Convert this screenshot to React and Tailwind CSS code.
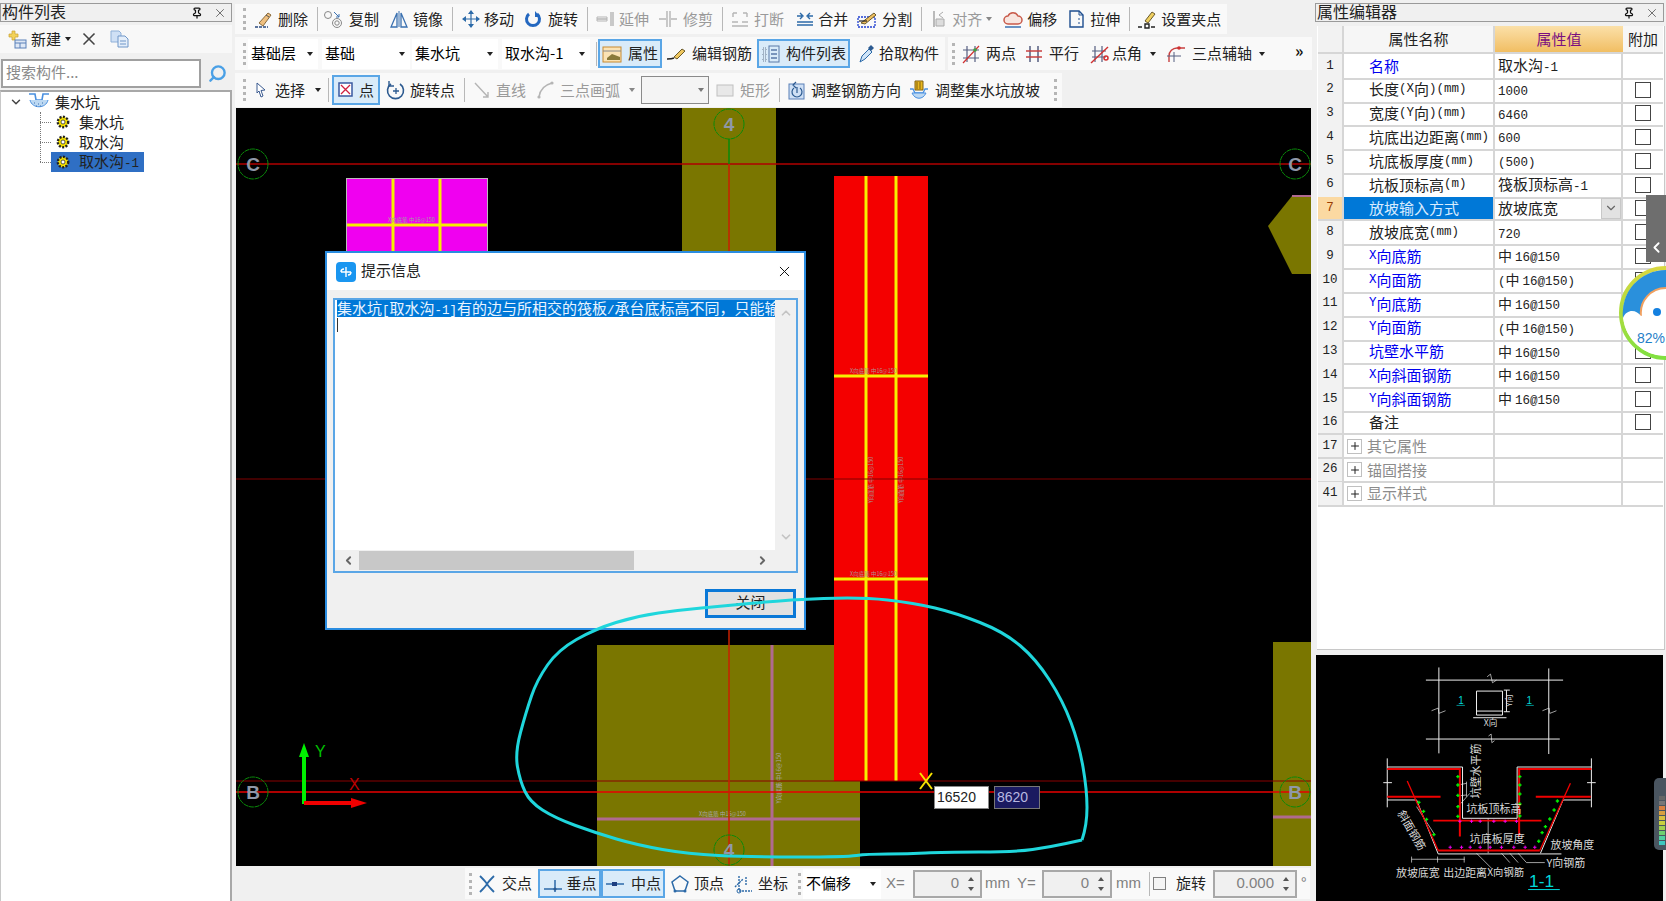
import { Pin, X, Search, ChevronDown, ChevronUp, ChevronLeft, ChevronRight, Plus } from "lucide-react";

// small icon frame, all toolbar icons share it
function I({ w = 20, children }) {
  return (
    <svg width={w} height="20" viewBox={`0 0 ${w} 20`} fill="none" className="shrink-0">
      {children}
    </svg>
  );
}

function Grip({ className = "" }) {
  return <div className={`w-[3px] h-[22px] shrink-0 border-l-[3px] border-dotted border-[#b5b5b5] ${className}`} />;
}

function Sep({ className = "" }) {
  return <div className={`w-px h-[24px] shrink-0 bg-[#b8b8b8] ${className}`} />;
}

function Caret({ className = "" }) {
  return <div className={`w-0 h-0 shrink-0 border-x-[3.5px] border-x-transparent border-t-[4px] border-t-[#222] ${className}`} />;
}

function Tool({ icon, label, className = "", muted = false }) {
  return (
    <div className={`flex items-center shrink-0 whitespace-nowrap ${className}`}>
      {icon}
      <span className={muted ? "text-[#9a9a9a]" : "text-[#222]"}>{label}</span>
    </div>
  );
}

function Combo({ label, className = "" }) {
  return (
    <div className={`h-[30px] bg-white flex items-center justify-between pl-[3px] pr-[5px] shrink-0 ${className}`}>
      <span className="whitespace-nowrap">{label}</span>
      <Caret />
    </div>
  );
}

function ActiveBtn({ icon, label, className = "" }) {
  return (
    <div className={`h-[29px] flex items-center justify-center shrink-0 whitespace-nowrap bg-[#d9ebf9] border-2 border-[#5aa6e6] text-[#222] ${className}`}>
      {icon}
      <span>{label}</span>
    </div>
  );
}

function Spin({ value, className = "" }) {
  return (
    <div className={`h-[28px] flex items-center justify-end border-2 border-[#a8a8a8] bg-[#f0f0f0] text-[#808080] shrink-0 ${className}`}>
      <span className="font-['Liberation_Sans',sans-serif]">{value}</span>
      <div className="w-[18px] flex flex-col items-center ml-[3px] gap-[6px]">
        <div className="w-0 h-0 border-x-[3px] border-x-transparent border-b-[4px] border-b-[#555]" />
        <div className="w-0 h-0 border-x-[3px] border-x-transparent border-t-[4px] border-t-[#555]" />
      </div>
    </div>
  );
}

function Mixed({ text }) {
  // half width latin next to 15px hanzi, like the bitmap font in the app
  const parts = text.match(/[\x00-\x7f]+|[^\x00-\x7f]+/g) || [];
  return parts.map((p, i) => {
    if (p === "中") return <span key={i} className="text-[14px] mr-[3px]">{p}</span>;
    return /^[\x00-\x7f]/.test(p) ? (
      <span key={i} className="font-['Liberation_Mono',monospace] text-[12.5px]">{p}</span>
    ) : (
      <span key={i}>{p}</span>
    );
  });
}

const Gear = () => (
  <svg width="14" height="14" viewBox="0 0 14 14" className="shrink-0">
    <circle cx="7" cy="7" r="5.2" fill="#f4e000" stroke="#222" strokeWidth="2.4" strokeDasharray="2 1.4" />
    <circle cx="7" cy="7" r="2" fill="#fff" stroke="#333" strokeWidth="0.8" />
  </svg>
);

const rows = [
  ["1", "名称", "取水沟-1", "blue", false],
  ["2", "长度(X向)(mm)", "1000", "", true],
  ["3", "宽度(Y向)(mm)", "6460", "", true],
  ["4", "坑底出边距离(mm)", "600", "", true],
  ["5", "坑底板厚度(mm)", "(500)", "", true],
  ["6", "坑板顶标高(m)", "筏板顶标高-1", "", true],
  ["7", "放坡输入方式", "放坡底宽", "sel", true],
  ["8", "放坡底宽(mm)", "720", "", true],
  ["9", "X向底筋", "中16@150", "blue", true],
  ["10", "X向面筋", "(中16@150)", "blue", true],
  ["11", "Y向底筋", "中16@150", "blue", true],
  ["12", "Y向面筋", "(中16@150)", "blue", true],
  ["13", "坑壁水平筋", "中16@150", "blue", true],
  ["14", "X向斜面钢筋", "中16@150", "blue", true],
  ["15", "Y向斜面钢筋", "中16@150", "blue", true],
  ["16", "备注", "", "", true],
  ["17", "其它属性", "", "group", false],
  ["26", "锚固搭接", "", "group", false],
  ["41", "显示样式", "", "group", false],
];

function PropRow({ row }) {
  const [no, name, value, kind, check] = row;
  const sel = kind === "sel";
  const nameColor = kind === "blue" ? "text-[#0000f0]" : kind === "group" ? "text-[#8c8c8c]" : sel ? "text-[#d8ecff] bg-[#0078d7]" : "text-[#222]";
  return (
    <div className="grid grid-cols-[26px_151px_128px_40px] h-[23.8px]">
      <div className={`flex items-center justify-center border-r-2 border-b-2 border-[#d6d6d6] font-['Liberation_Mono',monospace] text-[12.5px] ${sel ? "bg-[#fbd9a2] text-[#9a3c00]" : "bg-[#f2f2f2] text-[#222]"}`}>
        {no}
      </div>
      <div className={`flex items-center border-r-2 border-b-2 border-[#d6d6d6] whitespace-nowrap ${kind === "group" ? "pl-[3px]" : "pl-[25px]"} ${nameColor}`}>
        {kind === "group" && (
          <div className="w-[15px] h-[15px] border border-[#c0c0c0] flex items-center justify-center mr-[5px] shrink-0">
            <Plus size={12} strokeWidth={2} color="#222" />
          </div>
        )}
        <Mixed text={name} />
      </div>
      <div className="flex items-center justify-between border-r-2 border-b-2 border-[#d6d6d6] pl-[3px] whitespace-nowrap text-[#222]">
        <span><Mixed text={value} /></span>
        {sel && (
          <div className="w-[20px] h-[21px] bg-[#e2e2e2] border border-[#c8c8c8] flex items-center justify-center">
            <ChevronDown size={14} color="#666" />
          </div>
        )}
      </div>
      <div className="flex items-center justify-center border-b-2 border-[#d6d6d6]">
        {check && <div className="w-[16px] h-[16px] border border-[#444] bg-white" />}
      </div>
    </div>
  );
}

function PanelTitle({ title, className = "" }) {
  return (
    <div className={`h-[19px] flex items-center border border-[#9a9a9a] bg-[#f0f0f0] text-[16px] text-[#222] ${className}`}>
      <span className="flex-1 whitespace-nowrap pl-px pb-[3px] leading-[16px]">{title}</span>
      <Pin size={12} strokeWidth={2.5} color="#111" className="mr-[10px]" />
      <X size={14} strokeWidth={1.4} color="#555" className="mr-[4px]" />
    </div>
  );
}

function LeftPanel() {
  return (
    <aside className="w-[232px] shrink-0 flex flex-col pt-[3px]">
      <PanelTitle title="构件列表" />
      <div className="h-[28px] mt-[3px] bg-[#f8f8f8] flex items-center pl-[6px] text-[15px]">
        <svg width="21" height="20" viewBox="0 0 21 20" className="shrink-0">
          <path d="M3 5h3V2h3v3h3v3H9v3H6V8H3z" fill="#f2d25a" stroke="#c9a030" strokeWidth="0.7" />
          <rect x="9" y="11" width="11" height="8" fill="#dfe8f5" stroke="#5a80b8" />
          <path d="M9 14h11M14 14v5" stroke="#5a80b8" />
        </svg>
        <span className="ml-[4px] text-[#222]">新建</span>
        <Caret className="ml-[4px]" />
        <X size={20} strokeWidth={2} color="#444" className="ml-[8px]" />
        <svg width="21" height="20" viewBox="0 0 21 20" className="ml-[10px] shrink-0">
          <path d="M2 2h8l2 2v9H2z" fill="#cfe0f5" stroke="#8fb0d8" />
          <path d="M9 7h7l3 3v8H9z" fill="#e4eefa" stroke="#6f96c8" />
          <path d="M11 12h6M11 15h6" stroke="#6f96c8" />
        </svg>
      </div>
      <div className="h-[31px] mt-[6px] flex items-start pl-px">
        <div className="w-[200px] h-[29px] border-2 border-[#a0a0a0] bg-white text-[#8a8a8a] text-[15px] flex items-center pl-[3px] pb-[3px]">搜索构件...</div>
        <div className="w-[29px] h-[29px] ml-[2px] flex items-center justify-center">
          <Search size={19} strokeWidth={3} color="#4aa0e6" className="-scale-x-100" />
        </div>
      </div>
      <div className="flex-1 bg-white border-t-2 border-r-2 border-[#a8a8a8] border-l border-l-[#c8c8c8] text-[15px] text-[#222] relative">
        <div className="h-[20px] flex items-center pl-[8px]">
          <ChevronDown size={14} strokeWidth={2.5} color="#444" />
          <svg width="22" height="20" viewBox="0 0 22 20" className="ml-[5px] shrink-0">
            <path d="M1 2h6l1 6h6l1-6h6" stroke="#4a90e0" strokeWidth="1.6" fill="none" />
            <path d="M2 8c2 9 16 9 18 0" fill="#bcd8f2" stroke="#4a90e0" />
            <path d="M6 11h1M10 12h1M14 11h1M8 14h1M12 14h1" stroke="#3a70b0" />
          </svg>
          <span className="ml-[5px]">集水坑</span>
        </div>
        <div className="absolute left-[39px] top-[20px] w-px h-[50px] border-l border-dotted border-[#777]" />
        {["集水坑", "取水沟", "取水沟-1"].map((t, i) => (
          <div key={t} className="h-[20px] flex items-center pl-[39px]">
            <div className="w-[11px] border-t border-dotted border-[#777]" />
            <span className={`h-[20px] w-[93px] flex items-center gap-[9px] pl-[5px] ${i === 2 ? "bg-[#2f6fc4]" : ""}`}>
              <Gear />
              <span className="whitespace-nowrap"><Mixed text={t} /></span>
            </span>
          </div>
        ))}
      </div>
    </aside>
  );
}

function TopBars() {
  return (
    <div className="h-[108px] pt-[4px] text-[15px] shrink-0">
      <div className="h-[30px] w-[992px] bg-[#f9f9f9] flex items-center">
        <Grip className="ml-[8px]" />
        <Tool className="ml-[7px] gap-[5px]" label="删除" icon={<I><path d="M2 18h13" stroke="#2a4a80" strokeWidth="1.5" strokeDasharray="3 1" /><path d="M6 14l9-10 3 2-8 11z" fill="#f0c080" stroke="#8a6a3a" /><path d="M13 6l3 2" stroke="#555" /></I>} />
        <Sep className="ml-[9px]" />
        <Tool className="ml-[5px] gap-[4px]" label="复制" icon={<I w={22}><circle cx="5" cy="6" r="3.5" stroke="#888" /><circle cx="14" cy="14" r="4.5" stroke="#888" /><circle cx="14" cy="14" r="2.2" stroke="#888" /><path d="M11 3l5 5m0-3v3h-3" stroke="#3a70b0" /></I>} />
        <Tool className="ml-[10px] gap-[4px]" label="镜像" icon={<I><path d="M10 2v16" stroke="#3a70b0" /><path d="M8 4L2 18h6zM12 4l6 14h-6z" stroke="#3a70b0" strokeWidth="1.3" /></I>} />
        <Sep className="ml-[9px]" />
        <Tool className="ml-[8px] gap-[3px]" label="移动" icon={<I><path d="M10 2v16M2 10h16" stroke="#2c6aa8" strokeWidth="1.2" /><path d="M10 1l-3 4h6zM10 19l-3-4h6zM1 10l4-3v6zM19 10l-4-3v6z" fill="#2c6aa8" /></I>} />
        <Tool className="ml-[10px] gap-[6px]" label="旋转" icon={<I w={18}><path d="M5 5a6.5 6.5 0 1 0 8 0" stroke="#2468c0" strokeWidth="3" /><path d="M11 2v6h5" fill="#2468c0" /></I>} />
        <Sep className="ml-[9px]" />
        <Tool muted className="ml-[7px] gap-[4px]" label="延伸" icon={<I><path d="M16 3v14M18 3v14M2 10h10" stroke="#b5b5b5" strokeWidth="1.4" /><path d="M2 8h10v4H2z" stroke="#b5b5b5" /></I>} />
        <Tool muted className="ml-[9px] gap-[5px]" label="修剪" icon={<I><path d="M9 2v16M12 2v16M1 10h7M13 10h6" stroke="#b5b5b5" strokeWidth="1.4" /></I>} />
        <Sep className="ml-[9px]" />
        <Tool muted className="ml-[7px] gap-[4px]" label="打断" icon={<I><path d="M2 13h6M12 13h6M2 17h16M3 4h4M13 4h4M3 4v4M17 4v4" stroke="#b5b5b5" strokeWidth="1.4" /></I>} />
        <Tool className="ml-[11px] gap-[3px]" label="合并" icon={<I><path d="M2 13h16M2 16h16M5 4l3 3-3 3M15 4l-3 3 3 3M2 7h5M13 7h5" stroke="#2c6aa8" strokeWidth="1.4" /></I>} />
        <Tool className="ml-[8px] gap-[4px]" label="分割" icon={<I w={22}><rect x="2" y="8" width="17" height="10" stroke="#2040d0" strokeDasharray="2 1" strokeWidth="1.3" /><path d="M5 14L18 4l2 2-11 9z" fill="#f0c060" stroke="#6a5a2a" /><path d="M3 12h8" stroke="#222" strokeWidth="1.2" /></I>} />
        <Sep className="ml-[9px]" />
        <Tool muted className="ml-[10px] gap-[4px]" label="对齐" icon={<I w={16}><path d="M2 2v16" stroke="#aaa" strokeWidth="1.6" /><path d="M4 10h8v7H4z" fill="#ddd" stroke="#aaa" /><path d="M11 3L7 6l4 3" stroke="#aaa" /></I>} />
        <Caret className="ml-[4px] border-t-[#888]" />
        <Tool className="ml-[11px] gap-[4px]" label="偏移" icon={<I><path d="M5 15a4 4 0 0 1 0-8 5.5 5.5 0 0 1 10 0 4 4 0 0 1 0 8z" fill="#f8e6e0" stroke="#c85a4a" strokeWidth="1.5" /><path d="M2 18h16" stroke="#3a70b0" strokeWidth="1.5" /></I>} />
        <Tool className="ml-[10px] gap-[3px]" label="拉伸" icon={<I><path d="M3 2h9l4 4v12H3z" stroke="#1f4f90" strokeWidth="1.4" /><path d="M12 2v4h4M11 10h2M11 14h2" stroke="#1f4f90" /></I>} />
        <Sep className="ml-[9px]" />
        <Tool className="ml-[7px] gap-[4px]" label="设置夹点" icon={<I><path d="M1 18h4M8 15h4v4H8zM14 18h4" stroke="#222" strokeWidth="1.4" /><path d="M8 12l7-9 3 2-7 9z" fill="#f0d060" stroke="#6a5a2a" /></I>} />
      </div>

      <div className="h-[33px] mt-[3px] flex">
        <div className="w-[710px] bg-[#f9f9f9] flex items-center">
          <Grip className="ml-[8px]" />
          <Combo label="基础层" className="ml-[2px] w-[70px]" />
          <Combo label="基础" className="ml-[4px] w-[88px]" />
          <Combo label="集水坑" className="ml-[2px] w-[86px]" />
          <Combo label="取水沟-1" className="ml-[4px] w-[88px]" />
          <Sep className="ml-[6px]" />
          <ActiveBtn className="ml-px w-[64px] gap-[4px]" label="属性" icon={<I w={22}><rect x="1" y="3" width="18" height="15" fill="#fbe3b4" stroke="#c88a30" /><path d="M1 7h18" stroke="#888" /><path d="M5 14l5-4 8 3v3H5z" fill="#8a7a3a" /></I>} />
          <Tool className="ml-[4px] gap-[6px]" label="编辑钢筋" icon={<I><path d="M1 15c4 0 5 0 7-1" stroke="#222" strokeWidth="1.4" /><path d="M8 13l8-8 3 2-8 8z" fill="#f0c860" stroke="#6a5a2a" /></I>} />
          <ActiveBtn className="ml-[5px] w-[93px] gap-[5px]" label="构件列表" icon={<I w={20}><path d="M2 4h3v3H2zM2 9h3v3H2zM2 14h3v3H2z" stroke="#6a7a90" strokeDasharray="1 1" /><rect x="8" y="2" width="10" height="16" stroke="#5a7aa8" /><path d="M10 6h6M10 10h6M10 14h6" stroke="#5a7aa8" strokeWidth="1.3" /></I>} />
          <Tool className="ml-[8px] gap-[4px]" label="拾取构件" icon={<I w={17}><path d="M2 18l2-6 7-7 3 3-7 7z" fill="#cfe4f8" stroke="#2c6aa8" /><path d="M10 4l3-3 3 3-3 3z" fill="#2c5a90" /></I>} />
        </div>
        <div className="flex-1 ml-[3px] bg-[#f9f9f9] flex items-center">
          <Grip className="ml-[4px]" />
          <Tool className="ml-[6px] gap-[5px]" label="两点" icon={<I><path d="M6 2v16M14 2v16M2 6h16M2 14h16" stroke="#555e80" strokeWidth="1.2" /><path d="M2 19L18 2" stroke="#d03030" strokeWidth="1.2" /><circle cx="14" cy="6" r="1.8" fill="#40a040" /></I>} />
          <Tool className="ml-[8px] gap-[5px]" label="平行" icon={<I><path d="M6 2v16M14 2v16" stroke="#555e80" strokeWidth="1.5" /><path d="M2 7h16M2 13h16" stroke="#c84040" strokeWidth="1.5" /></I>} />
          <Tool className="ml-[11px] gap-[2px]" label="点角" icon={<I><path d="M5 2v16M12 2v16M2 7h14M2 13h14" stroke="#555e80" strokeWidth="1.2" /><path d="M1 19L18 3" stroke="#d03030" strokeWidth="1.4" /><circle cx="16" cy="14" r="2" stroke="#d03030" strokeWidth="1.5" /></I>} />
          <Caret className="ml-[8px]" />
          <Tool className="ml-[9px] gap-[5px]" label="三点辅轴" icon={<I w={22}><path d="M4 18V12a8 8 0 0 1 8-8h8" stroke="#c84040" strokeWidth="1.4" /><path d="M9 8v10M2 12h14" stroke="#555e80" /><circle cx="14" cy="4" r="1.8" fill="#d03030" /></I>} />
          <Caret className="ml-[7px]" />
          <span className="ml-[30px] -mt-[8px] font-bold text-[#111] text-[16px]">»</span>
        </div>
      </div>

      <div className="h-[34px] mt-[3px] w-[827px] bg-[#f9f9f9] flex items-center">
        <Grip className="ml-[8px]" />
        <Tool className="ml-[9px] gap-[8px]" label="选择" icon={<I w={12}><path d="M2 3l8 7-4 .5L8 16l-2 1-2-6-2 2z" fill="#fff" stroke="#3a5a90" /></I>} />
        <Caret className="ml-[10px]" />
        <Sep className="ml-[7px]" />
        <ActiveBtn className="ml-[3px] w-[48px] h-[30px] gap-[6px]" label="点" icon={<I w={15}><rect x="1" y="3" width="13" height="13" fill="#fff" stroke="#3a5aa0" strokeWidth="1.5" /><path d="M3 5l9 9M12 5l-9 9" stroke="#d02040" strokeWidth="1.3" /></I>} />
        <Tool className="ml-[6px] gap-[4px]" label="旋转点" icon={<I><path d="M5 4a8 8 0 1 0 9 0" stroke="#2c5a90" strokeWidth="1.6" /><path d="M3 1v5h5" stroke="#2c5a90" strokeWidth="1.4" /><path d="M10 8v6M7 11h6" stroke="#2c5a90" strokeWidth="1.3" /></I>} />
        <Sep className="ml-[9px]" />
        <Tool muted className="ml-[8px] gap-[5px]" label="直线" icon={<I w={18}><path d="M2 3l13 14m0-5v5h-5" stroke="#b5b5b5" strokeWidth="1.4" /></I>} />
        <Tool muted className="ml-[10px] gap-[6px]" label="三点画弧" icon={<I w={18}><path d="M3 17C4 9 8 5 16 3" stroke="#b5b5b5" strokeWidth="1.5" /><circle cx="3" cy="17" r="1.6" fill="#b5b5b5" /><circle cx="16" cy="3" r="1.6" fill="#b5b5b5" /></I>} />
        <Caret className="ml-[9px] border-t-[#888]" />
        <div className="ml-[6px] w-[68px] h-[28px] border border-[#8a8a8a] bg-[#f4f4f4] flex items-center justify-end pr-[4px] shrink-0"><Caret className="border-t-[#777]" /></div>
        <Tool muted className="ml-[7px] gap-[6px]" label="矩形" icon={<I w={18}><rect x="1" y="5" width="16" height="11" fill="#e8e8e8" stroke="#c0c0c0" /></I>} />
        <Sep className="ml-[9px]" />
        <Tool className="ml-[7px] gap-[4px]" label="调整钢筋方向" icon={<I><rect x="2" y="4" width="15" height="15" fill="#cfe0f5" stroke="#5a80b8" /><path d="M7 8a5 5 0 1 0 6 0M9 2l-3 3 3 3M10 7v6" stroke="#2c5a90" strokeWidth="1.2" /></I>} />
        <Tool className="ml-[8px] gap-[6px]" label="调整集水坑放坡" icon={<I><path d="M6 1h8v9H6z" fill="#e8b820" stroke="#806010" /><path d="M8 2v7M11 2v7" stroke="#806010" /><path d="M1 9h3l2 4h8l2-4h3" stroke="#4a90e0" strokeWidth="1.3" /><path d="M3 13c3 7 11 7 14 0z" fill="#bcd8f2" stroke="#4a90e0" /></I>} />
        <Grip className="ml-[14px]" />
      </div>
    </div>
  );
}

function AxisMark({ cx, cy, label }) {
  return (
    <g>
      <circle cx={cx} cy={cy} r="15" stroke="#0a8a0a" strokeWidth="1" fill="none" strokeDasharray="5 0.6" />
      <text x={cx} y={cy + 7} textAnchor="middle" fontSize="19" fontWeight="700" fill="#8f98a8" fontFamily="Liberation Sans, sans-serif">{label}</text>
    </g>
  );
}

function Canvas() {
  return (
    <svg viewBox="236 108 1075 758" width="1075" height="758" className="block bg-black">
      {/* slabs */}
      <rect x="682" y="108" width="94" height="490" fill="#7a7600" />
      <rect x="597" y="645" width="263" height="221" fill="#7a7600" />
      <rect x="1273" y="642" width="38" height="224" fill="#7a7600" />
      <path d="M1311 196H1292L1268 226 1292 274H1311z" fill="#7a7600" />
      <path d="M1292 196H1311" stroke="#b06a90" strokeWidth="2" />
      <path d="M1273 817H1311" stroke="#b06a90" strokeWidth="3" />
      <rect x="346.500" y="178.500" width="141" height="90" fill="#f000f0" stroke="#bbb" />
      <path d="M393 179v90M440 179v90M347 225h140" stroke="#f5f000" strokeWidth="3" />
      <text x="388" y="222" fontSize="5.500" fill="#a0a0a0">X向底筋 中16@150</text>
      <rect x="834" y="176" width="94" height="605" fill="#f40000" />
      <path d="M866 176v605M896 176v605M834 376h94M834 579h94" stroke="#f5f000" strokeWidth="3" />
      <text x="850" y="373" fontSize="5.500" fill="#b09090">X向底筋 中16@150</text>
      <text x="850" y="576" fontSize="5.500" fill="#b09090">X向底筋 中16@150</text>
      <text transform="translate(873 480) rotate(-90)" textAnchor="middle" fontSize="5.500" fill="#b09090">Y向底筋 中16@150</text>
      <text transform="translate(903 480) rotate(-90)" textAnchor="middle" fontSize="5.500" fill="#b09090">Y向面筋 中16@150</text>
      <path d="M772 645v221M597 819h263" stroke="#b06a90" strokeWidth="3" />
      <text x="699" y="816" fontSize="5.500" fill="#a8a8a8">X向底筋 中16@150</text>
      <text transform="translate(781 778) rotate(-90)" textAnchor="middle" fontSize="6" fill="#a8a8a8">Y向底筋 中16@150</text>
      {/* grid lines */}
      <path d="M236 164H1311" stroke="#b00000" strokeWidth="1.5" />
      <path d="M236 479H1311" stroke="#800000" />
      <path d="M236 781H1311" stroke="#8a0000" />
      <path d="M236 792H1311" stroke="#e80000" strokeWidth="1.5" />
      <path d="M729 164V866" stroke="#c82000" strokeWidth="1.5" />
      <path d="M729 139V164" stroke="#0a8a0a" strokeWidth="1.5" />
      <AxisMark cx={729} cy={124} label="4" />
      <AxisMark cx={729} cy={850} label="4" />
      <AxisMark cx={253} cy={164} label="C" />
      <AxisMark cx={1295} cy={164} label="C" />
      <AxisMark cx={253} cy={792} label="B" />
      <AxisMark cx={1295} cy={792} label="B" />
      {/* ucs */}
      <path d="M304 804V752" stroke="#00f000" strokeWidth="4" />
      <path d="M304 743l-5 14h10z" fill="#00f000" />
      <path d="M304 803H352" stroke="#f00000" strokeWidth="4" />
      <path d="M367 803l-16-5v10z" fill="#f00000" />
      <text x="315" y="757" fontSize="16" fill="#00c000" fontFamily="Liberation Sans, sans-serif">Y</text>
      <text x="349" y="790" fontSize="16" fill="#c00000" fontFamily="Liberation Sans, sans-serif">X</text>
      <path d="M920 773l12 16M932 773l-12 16" stroke="#f5e000" strokeWidth="2" />
    </svg>
  );
}

function Dialog() {
  return (
    <div className="absolute left-[89px] top-[143px] w-[481px] h-[379px] border-2 border-[#2a8ce0] bg-[#f0f0f0] flex flex-col">
      <div className="h-[37px] bg-white flex items-center pl-[9px] pr-[11px] shrink-0">
        <div className="w-[20px] h-[20px] rounded-[4px] bg-[#1a96f0] flex items-center justify-center shrink-0">
          <svg width="14" height="14" viewBox="0 0 14 14" fill="none"><path d="M7 2v10M2 7h10M2 7c0-2 1-3 3-3M12 7c0 2-1 3-3 3" stroke="#fff" strokeWidth="1.4" /></svg>
        </div>
        <span className="ml-[5px] text-[15px] text-[#222] pb-[2px]">提示信息</span>
        <X size={17} strokeWidth={1.4} color="#111" className="ml-auto" />
      </div>
      <div className="mx-[6px] mt-[8px] h-[275px] border-2 border-[#5aa6e6] bg-[#f0f0f0] flex flex-col">
        <div className="flex flex-1 min-h-0">
          <div className="flex-1 bg-white pl-[2px] min-w-0 overflow-hidden">
            <div className="h-[17px] bg-[#0078d7] text-[#e8f4ff] text-[15px] leading-[15px] whitespace-nowrap overflow-hidden">
              <Mixed text="集水坑[取水沟-1]有的边与所相交的筏板/承台底标高不同，只能输" />
            </div>
            <div className="w-px h-[14px] bg-[#333] mt-px" />
          </div>
          <div className="w-[21px] flex flex-col items-center justify-between py-[6px]">
            <ChevronUp size={14} strokeWidth={3} color="#c4c4c4" />
            <ChevronDown size={14} strokeWidth={3} color="#c4c4c4" />
          </div>
        </div>
        <div className="h-[21px] flex items-center pl-[7px] pr-[27px]">
          <ChevronLeft size={13} strokeWidth={3.5} color="#666" />
          <div className="h-[19px] w-[275px] bg-[#c8c8c8] ml-[4px]" />
          <ChevronRight size={13} strokeWidth={3.5} color="#666" className="ml-auto" />
        </div>
      </div>
      <div className="flex justify-end mt-[16px] mr-[8px]">
        <div className="w-[91px] h-[29px] border-[3px] border-[#0a78d7] bg-[#e1e1e1] flex items-center justify-center text-[15px] text-[#222] pb-[2px]">关闭</div>
      </div>
    </div>
  );
}

// hand drawn cloud line, smoothed through the midpoints
const pts = [[1082,840],[1087,825],[1087,790],[1079,744],[1063,701],[1036,659],[1004,632],[956,613],[914,603],[861,597],[786,600],[723,606],[680,610],[637,616],[595,629],[558,650],[537,680],[526,712],[515,753],[520,781],[530,802],[555,818],[596,833],[637,845],[688,854],[749,857],[846,857],[867,854],[908,854],[943,852],[1015,852],[1050,847],[1082,840]];
const curve = pts.reduce((d, p, i) => {
  if (i === 0) return `M${p[0]} ${p[1]}`;
  if (i === pts.length - 1) return `${d} L${p[0]} ${p[1]}`;
  const next = pts[i + 1];
  return `${d} Q${p[0]} ${p[1]} ${(p[0] + next[0]) / 2} ${(p[1] + next[1]) / 2}`;
}, "");

function BottomBar() {
  return (
    <div className="h-[35px] shrink-0 flex items-center text-[15px] bg-[#f0f0f0]">
      <div className="h-[31px] flex items-center bg-[#f9f9f9] ml-[230px] w-[845px]">
        <Grip className="ml-[4px]" />
        <Tool className="ml-[5px] gap-[5px]" label="交点" icon={<I><path d="M3 2c4 4 6 6 7 8s3 4 7 8M17 2c-4 4-6 6-7 8s-3 4-7 8" stroke="#2c6aa8" strokeWidth="1.8" /></I>} />
        <ActiveBtn className="ml-[6px] w-[63px] gap-[4px]" label="垂点" icon={<I w={20}><path d="M1 15h18M12 6v12" stroke="#2c6aa8" strokeWidth="1.5" /><circle cx="12" cy="15" r="1.6" fill="#2c5a90" /></I>} />
        <ActiveBtn className="w-[64px] gap-[6px]" label="中点" icon={<I w={20}><path d="M1 10h18" stroke="#2c6aa8" strokeWidth="1.5" /><rect x="7" y="8" width="5" height="4" fill="#1f3f80" /></I>} />
        <Tool className="ml-[5px] gap-[4px]" label="顶点" icon={<I><path d="M10 2l8 6-3 9H5L2 8z" stroke="#2c6aa8" strokeWidth="1.5" /><circle cx="5" cy="17" r="1.5" fill="#2c6aa8" /><circle cx="15" cy="17" r="1.5" fill="#2c6aa8" /></I>} />
        <Tool className="ml-[8px] gap-[4px]" label="坐标" icon={<I w={22}><path d="M7 2v15h13M3 13l8-8M14 3v9" stroke="#2c6aa8" strokeWidth="1.4" strokeDasharray="2 1" /><circle cx="7" cy="17" r="2" stroke="#2c6aa8" /></I>} />
        <Grip className="ml-[10px]" />
        <Combo label="不偏移" className="ml-[2px] w-[78px]" />
        <span className="ml-[5px] w-[21px] text-[#808080] font-['Liberation_Sans',sans-serif]">X=</span>
        <Spin value="0" className="ml-[6px] w-[69px]" />
        <span className="ml-[3px] w-[27px] text-[#808080] font-['Liberation_Sans',sans-serif]">mm</span>
        <span className="ml-[5px] w-[20px] text-[#808080] font-['Liberation_Sans',sans-serif]">Y=</span>
        <Spin value="0" className="ml-[5px] w-[70px]" />
        <span className="ml-[4px] w-[26px] text-[#808080] font-['Liberation_Sans',sans-serif]">mm</span>
        <Sep className="ml-[7px]" />
        <div className="ml-[3px] w-[13px] h-[13px] border border-[#808080] bg-[#f4f4f4] shrink-0" />
        <span className="ml-[10px] text-[#222] whitespace-nowrap">旋转</span>
        <Spin value="0.000" className="ml-[7px] w-[84px]" />
        <span className="ml-[4px] text-[#808080]">°</span>
      </div>
    </div>
  );
}

const greens = [[327,457],[341,484],[350,508],[372,554],[444,380],[444,405],[444,436],[444,470],[444,499],[630,380],[630,405],[630,432],[630,462],[630,498],[743,453],[733,480],[720,507],[707,530],[697,548],[687,574]];
const magentas = [[450,514],[485,514],[511,514],[552,514],[586,514],[620,514],[421,592],[455,592],[481,592],[511,592],[541,592],[575,592],[612,592],[646,592],[675,592]];

function Label({ x, y, children, size = 33, rotate }) {
  return (
    <text x={rotate ? 0 : x} y={rotate ? 0 : y} transform={rotate ? `translate(${x} ${y}) rotate(${rotate})` : undefined} fontSize={size} fill="#d8d8d8" fontFamily="Noto Sans CJK SC, sans-serif">
      {children}
    </text>
  );
}

function Preview() {
  return (
    <svg viewBox="18 15 1042 738" width="347" height="246" className="block bg-black">
      <g stroke="#eee" strokeWidth="3" fill="none">
        <path d="M348 90H760M348 267H750M387 52V310M717 55V312" />
        <path d="M500 123H578V195H500ZM500 183H578M590 120V185M582 120H600M582 185H600M490 203H590" />
        <path d="M532 80l10-8 6 26 12-8M536 258l8-6 2 26 8-6M365 182l20-8 2 16 20-8M698 182l20-8 2 16 20-8" strokeWidth="2" />
        <path d="M232 325V472M845 325V472M220 398H246M832 398H858" />
        <path d="M232 351H458V505H622V351H845M232 450H320L385 612H755M692 610L760 450H843" />
        <path d="M535 505V610M500 610l45 45M575 610l25 28M600 610l25 28M625 610l25 28 M650 638H705M305 628H465M305 620V638M383 620V638M463 620V638" strokeWidth="2" />
        <path d="M470 395V440M470 400L445 405M470 435L445 438M480 430L444 470M320 470L375 555" strokeWidth="2" />
      </g>
      <g stroke="#f00000" strokeWidth="6" fill="none">
        <path d="M232 357H450V560M845 357H628V560M232 440H392M678 440H843M370 512H695" />
        <path d="M385 602H690" />
      </g>
      <path d="M292 393L385 602M690 602L782 400" stroke="#f00000" strokeWidth="4" />
      {greens.map(([x, y]) => <path key={`${x}-${y}`} d={`M${x - 5} ${y}h10M${x} ${y - 5}v10`} stroke="#00f000" strokeWidth="4" />)}
      {magentas.map(([x, y]) => <path key={`${x}-${y}`} d={`M${x - 5} ${y}h10M${x} ${y - 5}v10`} stroke="#f000f0" strokeWidth="3" />)}
      <text x="445" y="163" fontSize="30" fill="#00d8d8" fontFamily="Liberation Sans, sans-serif">1</text>
      <text x="650" y="163" fontSize="30" fill="#00d8d8" fontFamily="Liberation Sans, sans-serif">1</text>
      <path d="M440 166H465M648 166H672" stroke="#00d8d8" strokeWidth="2" />
      <Label x={522} y={228} size={26}>X向</Label>
      <Label x={606} y={170} size={24} rotate={-90}>Y向</Label>
      <Label x={510} y={445} size={33} rotate={-90}>坑壁水平筋</Label>
      <Label x={470} y={488}>坑板顶标高</Label>
      <Label x={480} y={578}>坑底板厚度</Label>
      <Label x={722} y={596}>放坡角度</Label>
      <Label x={710} y={652}>Y向钢筋</Label>
      <Label x={258} y={682}>放坡底宽</Label>
      <Label x={400} y={682}>出边距离</Label>
      <Label x={532} y={678} size={31}>X向钢筋</Label>
      <Label x={262} y={490} rotate={60}>斜面钢筋</Label>
      <text x="658" y="710" fontSize="52" fill="#00d8d8" fontFamily="Liberation Sans, sans-serif">1-1</text>
      <path d="M655 719H750" stroke="#00d8d8" strokeWidth="3" />
    </svg>
  );
}

function Gauge() {
  return (
    <svg width="47" height="94" viewBox="0 0 47 94" className="absolute left-[307px] top-[266px]">
      <defs>
        <linearGradient id="ring" x1="0" y1="0" x2="0" y2="1">
          <stop offset="0" stopColor="#d8d840" />
          <stop offset="1" stopColor="#80e040" />
        </linearGradient>
      </defs>
      <circle cx="47" cy="47" r="45" fill="#fff" stroke="url(#ring)" strokeWidth="4" />
      <path d="M4 52A43 43 0 0 1 47 4V22A25 25 0 0 0 22 52z" fill="#2a90dc" />
      <path d="M22 50A25 25 0 0 1 47 22" stroke="#f0a060" strokeWidth="2" fill="none" />
      <path d="M4 52c4-10 14-8 18-2 5-2 14-2 25 0v40A43 43 0 0 1 4 52z" fill="#fff" />
      <circle cx="38" cy="46" r="4" fill="#1480e0" />
      <text x="18" y="77" fontSize="14" fill="#1f80c8" fontFamily="Liberation Sans, sans-serif">82%</text>
    </svg>
  );
}

function RightPanel() {
  return (
    <aside className="w-[354px] shrink-0 pt-[3px] relative text-[15px]">
      <PanelTitle title="属性编辑器" className="ml-[3px] mr-[2px]" />
      <div className="mt-[4px] ml-[5px] mr-px h-[624px] bg-white border-r border-b border-[#c8c8c8] pl-px">
        <div className="grid grid-cols-[26px_151px_128px_40px] h-[28px] text-[#222]">
          <div className="bg-[#f2f2f2] border-r-2 border-b-2 border-[#d6d6d6]" />
          <div className="bg-[#f6f6f6] border-r-2 border-b-2 border-[#d6d6d6] flex items-center justify-center">属性名称</div>
          <div className="bg-gradient-to-b from-[#fbe0a8] to-[#f1be62] border-b-2 border-[#d6d6d6] flex items-center justify-center text-[#7a1080]">属性值</div>
          <div className="bg-[#f6f6f6] border-b-2 border-[#d6d6d6] flex items-center justify-center">附加</div>
        </div>
        {rows.map((r) => <PropRow key={r[0]} row={r} />)}
      </div>
      <div className="mt-[5px] ml-[4px]"><Preview /></div>
      <div className="absolute left-[334px] top-[195px] w-[20px] h-[67px] bg-[#6e6e6e] flex items-end justify-center pb-[6px]">
        <ChevronLeft size={17} strokeWidth={2.5} color="#fff" />
      </div>
      <Gauge />
      <div className="absolute left-[342px] top-[778px] w-[12px] h-[72px] rounded-l-[5px] bg-[#4a5560] flex flex-col items-end gap-px pt-[18px] pr-px">
        {["#666","#777","#d88040","#d8a040","#d8c040","#c8d040","#a0d050","#70d070","#50d0a0","#40c8c0"].map((c, i) => (
          <div key={i} className="w-[6px] h-[4px]" style={{ background: c }} />
        ))}
      </div>
    </aside>
  );
}

export default function App() {
  return (
    <div className="w-[1666px] h-[901px] overflow-hidden flex bg-[#f0f0f0] font-['Noto_Sans_CJK_SC','Liberation_Sans',sans-serif]">
      <LeftPanel />
      <main className="w-[1080px] shrink-0 flex flex-col pl-[3px]">
        <TopBars />
        <div className="relative w-[1075px] h-[758px] ml-px shrink-0">
          <Canvas />
          <Dialog />
          <svg viewBox="236 108 1075 758" width="1075" height="758" className="absolute inset-0 pointer-events-none">
            <path d={curve} fill="none" stroke="#1fd6dc" strokeWidth="3" strokeLinejoin="round" />
          </svg>
          <div className="absolute left-[698px] top-[678px] w-[55px] h-[23px] bg-white border border-[#888] flex items-center pl-[2px] text-[#222] font-['Liberation_Sans',sans-serif] text-[14px]">16520</div>
          <div className="absolute left-[758px] top-[678px] w-[46px] h-[23px] bg-[#1a1a60] border border-[#777] flex items-center pl-[2px] text-[#b8b8e0] font-['Liberation_Sans',sans-serif] text-[14px]">8620</div>
        </div>
        <BottomBar />
      </main>
      <RightPanel />
    </div>
  );
}
